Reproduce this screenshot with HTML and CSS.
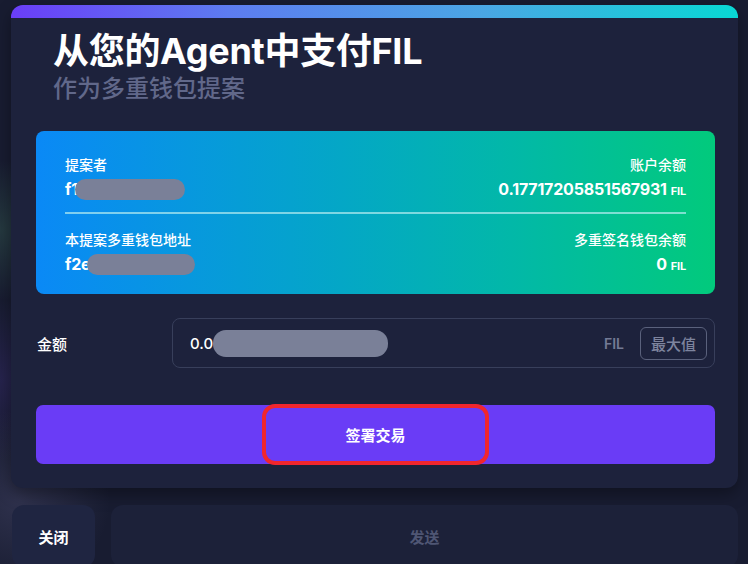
FILE: index.html
```html
<!DOCTYPE html>
<html lang="zh-CN">
<head>
<meta charset="UTF-8">
<meta name="viewport" content="width=device-width, initial-scale=1.0">
<title>从您的Agent中支付FIL</title>
<link rel="stylesheet" href="styles.css">
</head>
<body>
<div class="page">
    <div class="modal-card">
        <div class="card-bar"></div>
        <div class="card-body">
            <div class="card-header">
                <h1 class="card-title">从您的Agent中支付FIL</h1>
                <p class="card-subtitle">作为多重钱包提案</p>
            </div>

            <div class="info-box">
                <div class="info-row">
                    <div class="info-col">
                        <div class="info-label">提案者</div>
                        <div class="info-value">f1<span class="redact redact-a"></span></div>
                    </div>
                    <div class="info-col right">
                        <div class="info-label">账户余额</div>
                        <div class="info-value">0.17717205851567931 <span class="unit">FIL</span></div>
                    </div>
                </div>
                <div class="info-divider"></div>
                <div class="info-row">
                    <div class="info-col">
                        <div class="info-label">本提案多重钱包地址</div>
                        <div class="info-value">f2e<span class="redact redact-b"></span></div>
                    </div>
                    <div class="info-col right">
                        <div class="info-label">多重签名钱包余额</div>
                        <div class="info-value">0 <span class="unit">FIL</span></div>
                    </div>
                </div>
            </div>

            <div class="amount-row">
                <label class="amount-label">金额</label>
                <div class="amount-input">
                    <span class="amount-value">0.0<span class="redact redact-c"></span></span>
                    <span class="amount-unit">FIL</span>
                    <button class="max-btn">最大值</button>
                </div>
            </div>

            <button class="sign-btn"><span class="sign-mark">签署交易</span></button>
        </div>
    </div>

    <div class="footer-actions">
        <button class="close-btn">关闭</button>
        <button class="send-btn" disabled>发送</button>
    </div>
</div>
</body>
</html>
```

FILE: styles.css
```css
body {
    margin: 0;
    padding: 0;
    width: 748px;
    height: 564px;
    overflow: hidden;
    font-family: Inter, "Noto Sans CJK SC", sans-serif;
    color: #fff;
    background-color: #181c31;
    background-image:
        radial-gradient(circle at 0 230px, rgba(60, 110, 90, 0.35), transparent 70px),
        radial-gradient(circle at 20px 500px, rgba(90, 90, 130, 0.35), transparent 90px),
        radial-gradient(circle at 0 380px, rgba(70, 50, 140, 0.3), transparent 80px);
}

.page {
    padding: 5px 10px 0 11px;
}

.modal-card {
    background: #1d223c;
    border-radius: 12px;
    overflow: hidden;
    box-shadow: 0 6px 16px rgba(0, 0, 0, 0.35);
}

.card-bar {
    height: 13px;
    background: linear-gradient(90deg, #6a3ef8 0%, #5d7cf0 30%, #4aa6e4 65%, #08d8d4 100%);
}

.card-body {
    padding: 13px 23px 24px 25px;
}

.card-header {
    padding-left: 17px;
}

.card-title {
    margin: 0;
    font-size: 36px;
    line-height: 40px;
    font-weight: 700;
    letter-spacing: -0.3px;
}

.card-subtitle {
    margin: 3px 0 0 0;
    font-size: 24px;
    line-height: 30px;
    font-weight: 500;
    color: #61688a;
}

.info-box {
    margin-top: 27px;
    height: 163px;
    box-sizing: border-box;
    padding: 24px 29px 0 29px;
    border-radius: 8px;
    background: linear-gradient(90deg, #0a89f6 0%, #04a7c6 45%, #02b8a8 70%, #02ca7c 100%);
}

.info-row {
    display: flex;
    justify-content: space-between;
}

.info-col.right {
    text-align: right;
}

.info-label {
    font-size: 14px;
    line-height: 20px;
    font-weight: 500;
}

.info-value {
    margin-top: 3px;
    font-size: 16px;
    line-height: 22px;
    font-weight: 700;
    letter-spacing: -0.2px;
    display: flex;
    align-items: center;
}

.info-col.right .info-value {
    justify-content: flex-end;
    align-items: baseline;
}

.unit {
    font-size: 11px;
    margin-left: 4px;
}

.info-divider {
    height: 2px;
    margin: 10px 0 16px 0;
    background: rgba(180, 235, 240, 0.7);
}

.redact {
    display: inline-block;
    height: 21px;
    border-radius: 11px;
    background: #7a8098;
}

.redact-a {
    width: 110px;
    margin-left: -3px;
}

.redact-b {
    width: 108px;
    margin-left: -3px;
}

.redact-c {
    width: 175px;
    height: 27px;
    border-radius: 13px;
    margin-left: 0;
}

.amount-row {
    display: flex;
    align-items: center;
    margin-top: 24px;
}

.amount-label {
    width: 135px;
    padding-left: 1px;
    font-size: 15px;
    font-weight: 500;
}

.amount-input {
    flex: 1;
    height: 50px;
    box-sizing: border-box;
    display: flex;
    align-items: center;
    padding: 0 7px 0 17px;
    border: 1px solid #383f5b;
    border-radius: 8px;
}

.amount-value {
    flex: 1;
    display: flex;
    align-items: center;
    font-size: 15px;
    font-weight: 500;
}

.amount-unit {
    font-size: 14px;
    font-weight: 600;
    color: #737a95;
    margin-right: 16px;
}

.max-btn {
    width: 67px;
    height: 33px;
    border: 1px solid #5a617c;
    border-radius: 6px;
    background: transparent;
    color: #7d849e;
    font-family: inherit;
    font-size: 15px;
    font-weight: 500;
    padding: 0;
}

.sign-btn {
    display: flex;
    justify-content: center;
    align-items: center;
    width: 100%;
    height: 59px;
    margin-top: 37px;
    border: none;
    border-radius: 7px;
    background: #6a3cf6;
    color: #fff;
    font-family: inherit;
    font-size: 15px;
    font-weight: 700;
    padding: 0;
}

.sign-mark {
    display: flex;
    justify-content: center;
    align-items: center;
    width: 227px;
    height: 61px;
    box-sizing: border-box;
    margin-top: -1px;
    border: 4px solid #f1262d;
    border-radius: 13px;
}

.footer-actions {
    display: flex;
    gap: 16px;
    margin-top: 17px;
}

.footer-actions button {
    height: 62px;
    border: none;
    border-radius: 12px;
    font-family: inherit;
    font-size: 15px;
    font-weight: 700;
    padding: 0;
}

.close-btn {
    width: 83px;
    margin-left: 1px;
    background: #1f2541;
    color: #fff;
}

.send-btn {
    flex: 1;
    background: #1c2139;
    color: #4f5674;
}
```
